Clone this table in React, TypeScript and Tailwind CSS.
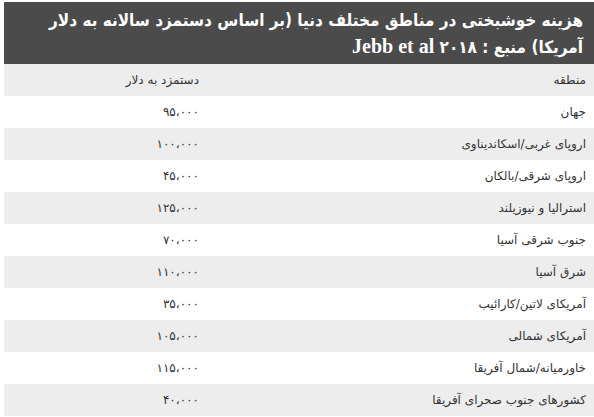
const rows: [string, string][] = [
  ["جهان", "۹۵،۰۰۰"],
  ["اروپای غربی/اسکاندیناوی", "۱۰۰،۰۰۰"],
  ["اروپای شرقی/بالکان", "۴۵،۰۰۰"],
  ["استرالیا و نیوزیلند", "۱۲۵،۰۰۰"],
  ["جنوب شرقی آسیا", "۷۰،۰۰۰"],
  ["شرق آسیا", "۱۱۰،۰۰۰"],
  ["آمریکای لاتین/کارائیب", "۳۵،۰۰۰"],
  ["آمریکای شمالی", "۱۰۵،۰۰۰"],
  ["خاورمیانه/شمال آفریقا", "۱۱۵،۰۰۰"],
  ["کشورهای جنوب صحرای آفریقا", "۴۰،۰۰۰"],
];

const Row = ({ region, value, shaded }: { region: string; value: string; shaded: boolean }) => (
  <div className={`flex h-8 items-center text-[12px] text-[#333] ${shaded ? "bg-[#ededed]" : "bg-white"}`}>
    <div className="w-[383px] pr-2">{region}</div>
    <div className="w-[207px] pr-3">{value}</div>
  </div>
);

export default function App() {
  return (
    <div className="h-[417px] w-[594px] bg-white pt-[2px]" dir="rtl" style={{ fontFamily: '"DejaVu Sans", sans-serif' }}>
      <div className="w-[590px]">
        <div
          className="flex h-[62px] flex-col justify-center whitespace-nowrap bg-[#4b4b4b] pr-[11px] text-[17px] font-bold leading-[26px] text-white"
          style={{ fontFamily: '"DejaVu Sans Condensed", "DejaVu Sans", sans-serif' }}
        >
          <div>هزینه خوشبختی در مناطق مختلف دنیا (بر اساس دستمزد سالانه به دلار</div>
          <div>
            آمریکا) منبع : ۲۰۱۸{" "}
            <span style={{ fontFamily: '"Liberation Serif", serif' }} className="text-[20px]">Jebb et al</span>
          </div>
        </div>
        <Row region="منطقه" value="دستمزد به دلار" shaded />
        {rows.map(([r, v], i) => (
          <Row key={r} region={r} value={v} shaded={i % 2 === 1} />
        ))}
      </div>
    </div>
  );
}
